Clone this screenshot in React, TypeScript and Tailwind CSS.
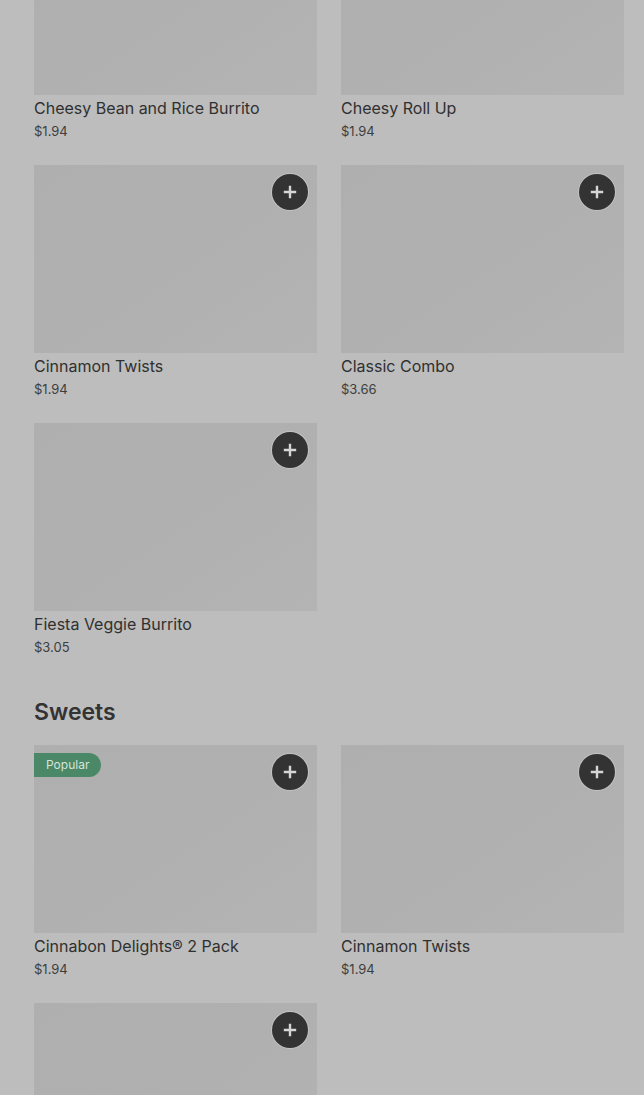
import React from 'react';

type Item = { name?: string; price?: string; popular?: boolean; noButton?: boolean };

const firstItems: Item[] = [
  { name: 'Cheesy Bean and Rice Burrito', price: '$1.94', noButton: true },
  { name: 'Cheesy Roll Up', price: '$1.94', noButton: true },
  { name: 'Cinnamon Twists', price: '$1.94' },
  { name: 'Classic Combo', price: '$3.66' },
  { name: 'Fiesta Veggie Burrito', price: '$3.05' },
];

// last one is cut by the bottom of the screen, only the picture shows
const sweets: Item[] = [
  { name: 'Cinnabon Delights® 2 Pack', price: '$1.94', popular: true },
  { name: 'Cinnamon Twists', price: '$1.94' },
  {},
];

const PlusIcon = () => (
  <svg width="14" height="14" viewBox="0 0 14 14" fill="none">
    <path d="M7 2v10M2 7h10" stroke="#d6d6d6" strokeWidth="2.4" strokeLinecap="square" />
  </svg>
);

const Card = ({ item }: { item: Item }) => {
  return (
    <div className="flex flex-col">
      <div className="relative h-[188px] bg-gradient-to-br from-[#afafaf] via-[#b0b0b0] to-[#b4b4b4]">
        {item.popular && (
          <div className="absolute left-0 top-2 h-6 px-3 rounded-r-full bg-[#4a8867] text-[12px] leading-6 text-[#d5e4da]">
            Popular
          </div>
        )}
        {!item.noButton && (
          <button className="absolute right-[9px] top-[9px] w-9 h-9 rounded-full bg-[#333333] ring-1 ring-[#cfcfcf]/60 flex items-center justify-center">
            <PlusIcon />
          </button>
        )}
      </div>
      {item.name && (
        <>
          <p className="mt-px text-base leading-6 text-[#303030]">{item.name}</p>
          <p className="mt-px text-[13px] leading-5 text-[#3d3d3d]">{item.price}</p>
        </>
      )}
    </div>
  );
};

export default function App() {
  return (
    <div
      className="h-[1095px] overflow-hidden bg-[#bdbdbd]"
      style={{ fontFamily: 'Inter, "Noto Sans", sans-serif' }}
    >
      <div className="-mt-[93px] pl-[34px] pr-5">
        <div className="grid grid-cols-2 gap-x-6 gap-y-6">
          {firstItems.map((it, i) => (
            <Card key={i} item={it} />
          ))}
        </div>

        <h2 className="pt-[39px] mb-[17px] text-[23px] leading-8 font-semibold text-[#333333]">Sweets</h2>

        <div className="grid grid-cols-2 gap-x-6 gap-y-6">
          {sweets.map((it, i) => (
            <Card key={i} item={it} />
          ))}
        </div>
      </div>
    </div>
  );
}
